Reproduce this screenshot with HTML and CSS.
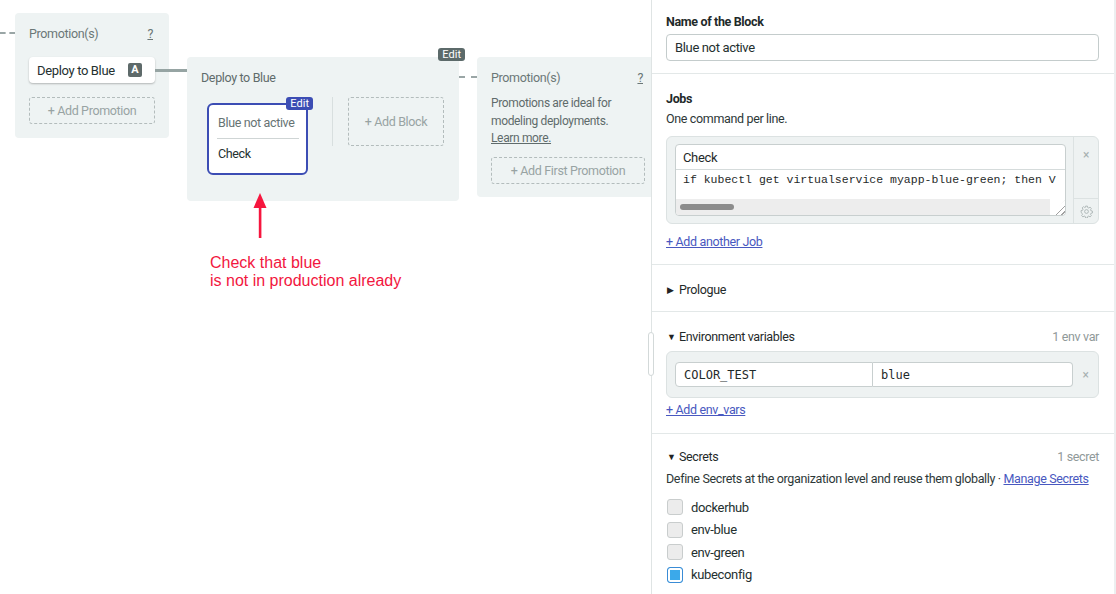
FILE: index.html
```html
<!DOCTYPE html>
<html>
<head>
<meta charset="utf-8">
<link rel="stylesheet" href="styles.css">
</head>
<body>
<div class="page">
  <div class="canvas">
    <div class="pipeline">
      <div class="stub"></div>
      <div class="promo promo-first">
        <div class="promo-head"><span>Promotion(s)</span><span class="qmark">?</span></div>
        <div class="promo-btn"><span>Deploy to Blue</span><span class="badge">A</span></div>
        <div class="dashed-btn promo-add">+ Add Promotion</div>
      </div>
      <div class="block">
        <span class="tag tag-dark">Edit</span>
        <div class="block-title">Deploy to Blue</div>
        <div class="block-row">
          <div class="card">
            <span class="tag tag-blue">Edit</span>
            <div class="card-name">Blue not active</div>
            <div class="card-job">Check</div>
          </div>
          <div class="vsep"></div>
          <div class="dashed-btn add-block">+ Add Block</div>
        </div>
      </div>
      <div class="dots"></div>
      <div class="promo promo-second">
        <div class="promo-head"><span>Promotion(s)</span><span class="qmark">?</span></div>
        <div class="promo-desc">Promotions are ideal for<br>modeling deployments.<br><span class="u">Learn more.</span></div>
        <div class="dashed-btn first-add">+ Add First Promotion</div>
      </div>
    </div>
    <div class="note">
      <svg class="arrow" width="14" height="46" viewBox="0 0 14 46"><path d="M7 0 L13.5 15 L0.5 15 Z" fill="#f6163e"/><rect x="5.8" y="13" width="2.6" height="32" fill="#f6163e"/></svg>
      <div class="note-text">Check that blue<br>is not in production already</div>
    </div>
  </div>

  <div class="panel">
    <span class="handle"></span>
    <section class="sec sec-name">
      <div class="label">Name of the Block</div>
      <div class="input">Blue not active</div>
    </section>

    <section class="sec sec-jobs">
      <div class="label">Jobs</div>
      <div class="hint">One command per line.</div>
      <div class="job-box">
        <div class="job-main">
          <div class="editor">
            <div class="job-name">Check</div>
            <div class="job-code">
              <div class="code-line">if kubectl get virtualservice myapp-blue-green; then V</div>
              <div class="hscroll"><span class="thumb"></span><span class="grip"></span></div>
            </div>
          </div>
        </div>
        <div class="job-side">
          <div class="side-top">×</div>
          <div class="side-bottom">
            <svg width="13" height="13" viewBox="0 0 24 24" fill="none" stroke="#a9b3b3" stroke-width="1.6" stroke-linejoin="round"><circle cx="12" cy="12" r="3.5"/><path d="M10.3 2h3.4l.6 2.8 1.9.8 2.4-1.6 2.4 2.4-1.6 2.4.8 1.9 2.8.6v3.4l-2.8.6-.8 1.9 1.6 2.4-2.4 2.4-2.4-1.6-1.9.8-.6 2.8h-3.4l-.6-2.8-1.9-.8-2.4 1.6-2.4-2.4 1.6-2.4-.8-1.9L2 13.7v-3.4l2.8-.6.8-1.9L4 5.4 6.4 3l2.4 1.6 1.9-.8z"/></svg>
          </div>
        </div>
      </div>
      <a class="link add-job">+ Add another Job</a>
    </section>

    <section class="sec sec-prologue">
      <div class="toggle"><span class="tri">▶</span>Prologue</div>
    </section>

    <section class="sec sec-env">
      <div class="row-head"><div class="toggle"><span class="tri">▼</span>Environment variables</div><span class="count">1 env var</span></div>
      <div class="env-box">
        <div class="env-inputs">
          <div class="env-in env-key">COLOR_TEST</div>
          <div class="env-in env-val">blue</div>
        </div>
        <div class="env-x">×</div>
      </div>
      <a class="link add-env">+ Add env_vars</a>
    </section>

    <section class="sec sec-secrets">
      <div class="row-head"><div class="toggle"><span class="tri">▼</span>Secrets</div><span class="count">1 secret</span></div>
      <div class="hint secrets-desc">Define Secrets at the organization level and reuse them globally · <a class="link">Manage Secrets</a></div>
      <div class="checks">
        <div class="check"><span class="box"></span>dockerhub</div>
        <div class="check"><span class="box"></span>env-blue</div>
        <div class="check"><span class="box"></span>env-green</div>
        <div class="check"><span class="box on"></span>kubeconfig</div>
      </div>
    </section>
  </div>
</div>
</body>
</html>
```

FILE: styles.css
```css
* { box-sizing: border-box; }
html, body { margin: 0; padding: 0; background: #fff; }
body {
  font-family: Roboto, "Noto Sans", sans-serif;
  font-size: 12.5px;
  letter-spacing: -0.35px;
  color: #2d3838;
}
.page { display: flex; width: 1116px; height: 594px; overflow: hidden; }

/* ---------- canvas ---------- */
.canvas { position: relative; width: 651px; flex-shrink: 0; overflow: hidden; }
.pipeline { display: flex; align-items: flex-start; padding-top: 13px; }
.stub { width: 15px; flex-shrink: 0; margin-top: 19px; border-top: 2px dashed #9aa6a6; }
.promo { background: #eef3f3; border-radius: 4px; flex-shrink: 0; }
.promo-first { width: 154px; height: 125px; padding: 13px 13px 0 14px; }
.promo-head { display: flex; justify-content: space-between; line-height: 16px; color: #6b7777; }
.qmark { text-decoration: underline; margin-right: 3px; }
.promo-btn {
  position: relative; margin-top: 15px; height: 26px; width: 126px;
  background: #fff; border-radius: 4px; box-shadow: 0 1px 2px rgba(0,0,0,.25);
  display: flex; align-items: center; justify-content: space-between; padding: 0 13px 0 8px;
  color: #24302f; white-space: nowrap; font-size: 13px;
}
.promo-btn::after {
  content: ""; position: absolute; left: 100%; top: 12px; width: 32px; height: 3px; background: #96a4a3;
}
.badge {
  background: #5e6a6a; color: #fff; font-weight: bold; font-size: 11px; letter-spacing: 0;
  width: 14px; height: 14px; line-height: 14px; text-align: center; border-radius: 2px;
}
.dashed-btn {
  border: 1px dashed #b3bcbc; border-radius: 3px; color: #98a3a3; white-space: nowrap;
  display: flex; align-items: center; justify-content: center;
}
.promo-add { margin-top: 14px; height: 27px; width: 126px; }

.block {
  position: relative; margin-left: 18px; margin-top: 44px; width: 272px; height: 144px;
  background: #eef3f3; border-radius: 4px; flex-shrink: 0; padding: 13px 0 0 14px;
}
.tag { position: absolute; font-size: 11px; color: #fff; line-height: 13px; padding: 0 4px; border-radius: 3px; letter-spacing: 0; }
.tag-dark { background: #5c6a6a; top: -9px; right: -6px; }
.tag-blue { background: #3c4db4; top: -8px; right: -7px; }
.block-title { line-height: 16px; color: #5f6b6b; }
.block-row { display: flex; align-items: flex-start; margin-top: 11px; padding-left: 6px; }
.card {
  position: relative; margin-top: 6px; width: 101px; height: 72px;
  border: 2px solid #3c4db4; border-radius: 6px; background: #fff; padding: 0 7px 0 8px;
}
.card-name { padding: 10px 0 7px 1px; line-height: 16px; color: #667373; border-bottom: 1px solid #cfd5d5; white-space: nowrap; }
.card-job { padding: 7px 0 0 1px; line-height: 16px; color: #24302f; }
.vsep { width: 1px; height: 49px; background: #d8dfdf; margin-left: 24px; }
.add-block { margin-left: 15px; width: 96px; height: 49px; }

.dots { width: 18px; flex-shrink: 0; margin-top: 63px; border-top: 2px dashed #9aa6a6; }
.promo-second { width: 182px; height: 140px; margin-top: 44px; padding: 13px 13px 0 14px; }
.promo-desc { margin-top: 9px; font-size: 12px; line-height: 17.5px; color: #5f6b6b; white-space: nowrap; }
.u { text-decoration: underline; }
.first-add { margin-top: 9px; height: 27px; width: 154px; }

.note { position: absolute; left: 210px; top: 193px; }
.arrow { display: block; margin-left: 43px; }
.note-text {
  margin-top: 15px; font-family: "Liberation Sans", Arial, sans-serif; font-size: 16px; line-height: 18px; color: #f2163e; letter-spacing: 0;
}

/* ---------- panel ---------- */
.panel {
  position: relative; width: 465px; flex-shrink: 0; border-left: 1px solid #dfe4e4; border-right: 2px solid #eceff0;
  display: flex; flex-direction: column;
}
.handle {
  position: absolute; left: -4px; top: 332px; width: 6px; height: 44px;
  background: #fff; border: 1px solid #d3d9d9; border-radius: 3px;
}
.sec { padding: 0 15px 0 14px; border-bottom: 1px solid #e3e8e8; }
.label { font-weight: bold; line-height: 16px; color: #1f2a2a; }
.sec-name { padding-top: 14px; padding-bottom: 12px; }
.input {
  margin-top: 4px; height: 27px; border: 1px solid #c4cccc; border-radius: 4px;
  padding: 0 8px; display: flex; align-items: center; color: #24302f; font-size: 13px;
}
.sec-jobs { padding-top: 17px; padding-bottom: 14px; }
.hint { margin-top: 4px; line-height: 16px; color: #2d3838; }
.job-box {
  margin-top: 9px; height: 88px; display: flex;
  background: #eef2f2; border: 1px solid #dce2e2; border-radius: 6px;
}
.job-main { flex: 1; padding: 7px 7px 7px 8px; }
.editor { height: 72px; border: 1px solid #c8cfcf; border-radius: 4px; background: #fff; overflow: hidden; display: flex; flex-direction: column; }
.job-name { height: 25px; border-bottom: 1px solid #d5dbdb; padding: 0 7px; display: flex; align-items: center; font-size: 13px; color: #1f2a2a; }
.job-code { flex: 1; display: flex; flex-direction: column; }
.code-line { font-family: "Liberation Mono", monospace; font-size: 11.5px; letter-spacing: 0; line-height: 18px; padding: 1px 0 0 7px; color: #1f2a2a; white-space: nowrap; }
.hscroll { margin-top: auto; height: 16px; background: #ededed; position: relative; margin-right: 15px; }
.thumb { position: absolute; left: 4px; top: 5px; width: 54px; height: 6px; border-radius: 3px; background: #8c8c8c; }
.grip {
  position: absolute; right: -15px; top: 0; width: 15px; height: 16px; background: #fff;
  background-image: repeating-linear-gradient(135deg, transparent 0 3px, #a0a0a0 3px 4px);
  clip-path: polygon(100% 10%, 100% 100%, 10% 100%);
}
.job-side { width: 25px; border-left: 1px solid #dce2e2; display: flex; flex-direction: column; }
.side-top { height: 62px; border-bottom: 1px solid #dce2e2; text-align: center; color: #a6b0b0; font-size: 12px; padding-top: 11px; line-height: 14px; }
.side-bottom { flex: 1; display: flex; align-items: center; justify-content: center; }
.link { color: #4858c0; text-decoration: underline; line-height: 16px; display: inline-block; }
.add-job { margin-top: 10px; }

.sec-prologue { padding-top: 17px; padding-bottom: 13px; }
.toggle { line-height: 16px; color: #1f2a2a; display: flex; align-items: center; }
.tri { font-size: 9px; width: 12px; margin-left: 1px; color: #222; }
.sec-env { padding-top: 17px; padding-bottom: 15px; }
.row-head { display: flex; justify-content: space-between; align-items: center; }
.count { color: #8f9999; line-height: 16px; }
.env-box {
  margin-top: 6px; height: 47px; display: flex; align-items: center;
  background: #eef2f2; border: 1px solid #dce2e2; border-radius: 6px; padding: 0 0 0 8px;
}
.env-inputs { display: flex; width: 398px; }
.env-in {
  height: 25px; border: 1px solid #c8cfcf; background: #fff; display: flex; align-items: center; letter-spacing: 0;
  padding: 0 8px; font-family: "DejaVu Sans Mono", monospace; font-size: 12px; color: #1f2a2a;
}
.env-key { width: 198px; border-radius: 4px 0 0 4px; }
.env-val { width: 200px; border-left: none; border-radius: 0 4px 4px 0; }
.env-x { flex: 1; text-align: center; color: #a6b0b0; font-size: 12px; }
.add-env { margin-top: 4px; }

.sec-secrets { padding-top: 15px; border-bottom: none; flex: 1; }
.secrets-desc { margin-top: 6px; white-space: nowrap; }
.checks { margin-top: 9px; }
.check { height: 22.5px; display: flex; align-items: center; color: #24302f; font-size: 13px; }
.box {
  width: 16px; height: 16px; margin-left: 1px; margin-right: 8px; border: 1px solid #c9cdcd; border-radius: 3px; background: #ececec;
}
.box.on { border: 1.5px solid #3a8cd6; background: #3ba9ea; box-shadow: inset 0 0 0 2px #fff; }
```
